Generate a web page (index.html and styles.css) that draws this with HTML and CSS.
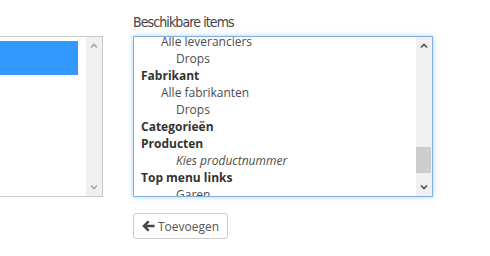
FILE: index.html
```html
<!DOCTYPE html>
<html lang="nl">
  <head>
    <meta charset="UTF-8" />
    <meta name="viewport" content="width=device-width, initial-scale=1.0" />
    <title>Menu items</title>
    <link rel="stylesheet" href="styles.css">
  </head>
  <body>
    <div class="page">
      <div class="col-selected">
        <div class="listbox">
          <div class="list-area">
            <div class="picked"></div>
          </div>
          <div class="scrollbar disabled">
            <div class="sb-btn">
              <svg width="8" height="5" viewBox="0 0 8 5"><polyline points="1,4.5 4,1.5 7,4.5" fill="none" stroke="currentColor" stroke-width="1.6"/></svg>
            </div>
            <div class="sb-track"></div>
            <div class="sb-btn">
              <svg width="8" height="5" viewBox="0 0 8 5"><polyline points="1,0.5 4,3.5 7,0.5" fill="none" stroke="currentColor" stroke-width="1.6"/></svg>
            </div>
          </div>
        </div>
      </div>

      <div class="col-available">
        <label class="field-label">Beschikbare items</label>
        <div class="listbox focused">
          <div class="list-area">
            <div class="options">
              <div class="opt lvl1">Alle leveranciers</div>
              <div class="opt lvl2">Drops</div>
              <div class="opt group">Fabrikant</div>
              <div class="opt lvl1">Alle fabrikanten</div>
              <div class="opt lvl2">Drops</div>
              <div class="opt group">Categorieën</div>
              <div class="opt group">Producten</div>
              <div class="opt lvl2 hint">Kies productnummer</div>
              <div class="opt group">Top menu links</div>
              <div class="opt lvl2">Garen</div>
            </div>
          </div>
          <div class="scrollbar">
            <div class="sb-btn">
              <svg width="8" height="5" viewBox="0 0 8 5"><polyline points="1,4.5 4,1.5 7,4.5" fill="none" stroke="currentColor" stroke-width="1.6"/></svg>
            </div>
            <div class="sb-track">
              <div class="sb-thumb"></div>
            </div>
            <div class="sb-btn">
              <svg width="8" height="5" viewBox="0 0 8 5"><polyline points="1,0.5 4,3.5 7,0.5" fill="none" stroke="currentColor" stroke-width="1.6"/></svg>
            </div>
          </div>
        </div>
        <div class="actions">
          <button class="btn-add">
            <svg width="13" height="12" viewBox="0 0 13 12"><path d="M0.2 6 L5.8 0.6 L7.6 2.3 L4.8 4.8 H12.6 V7.2 H4.8 L7.6 9.7 L5.8 11.4 Z" fill="#444"/></svg>
            Toevoegen
          </button>
        </div>
      </div>
    </div>
  </body>
</html>
```

FILE: styles.css
```css
body {
  margin: 0;
  font-family: "Open Sans", "Liberation Sans", sans-serif;
  font-size: 12px;
  color: #555;
  background: #fff;
  overflow: hidden;
}
.page {
  display: flex;
  gap: 30px;
  padding-top: 12px;
}
.col-selected {
  width: 200px;
  margin-left: -97px;
  padding-top: 24px;
}
.col-available {
  width: 300px;
}
.field-label {
  display: block;
  font-family: "DejaVu Sans Condensed", "DejaVu Sans", sans-serif;
  font-stretch: condensed;
  font-size: 14px;
  line-height: 20px;
  color: #444;
  margin-bottom: 4px;
  letter-spacing: -0.9px;
}
.listbox {
  display: flex;
  height: 159px;
  border: 1px solid #c9c9c9;
  background: #fff;
}
.listbox.focused {
  border-color: #80aee0;
  box-shadow: 0 0 5px rgba(102, 175, 233, 0.55);
}
.list-area {
  flex: 1;
  overflow: hidden;
  padding: 4px 8px 4px 0;
}
.picked {
  height: 34px;
  background: #3399ff;
}
.options {
  margin-top: -8px;
}
.opt {
  line-height: 17px;
  white-space: nowrap;
  color: #4d4d4d;
}
.opt.group {
  padding-left: 7px;
  font-weight: bold;
  color: #333;
}
.opt.lvl1 {
  padding-left: 27px;
}
.opt.lvl2 {
  padding-left: 42px;
}
.opt.hint {
  font-style: italic;
}
.scrollbar {
  width: 16px;
  display: flex;
  flex-direction: column;
  background: #f0f0f0;
  color: #505050;
}
.scrollbar.disabled {
  color: #a8a8a8;
}
.sb-btn {
  height: 17px;
  display: flex;
  align-items: center;
  justify-content: center;
}
.sb-track {
  flex: 1;
  padding-top: 93px;
}
.sb-thumb {
  height: 26px;
  margin-right: 1px;
  background: #cdcdcd;
}
.actions {
  margin-top: 16px;
}
.btn-add {
  display: flex;
  align-items: center;
  gap: 3px;
  height: 26px;
  padding: 0 8px 0 8px;
  font-family: "Open Sans", "Liberation Sans", sans-serif;
  font-size: 12px;
  color: #555;
  background: #fff;
  border: 1px solid #ccc;
  border-radius: 3px;
}
```
